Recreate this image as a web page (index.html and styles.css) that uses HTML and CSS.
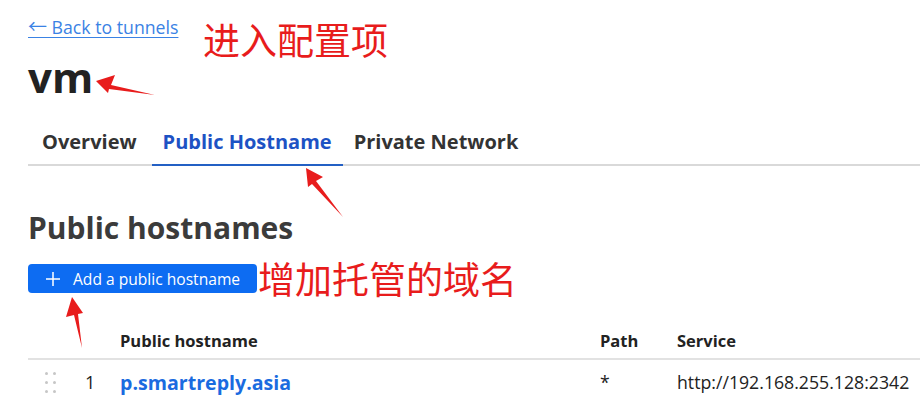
FILE: index.html
```html
<!DOCTYPE html>
<html lang="en">
<head>
<meta charset="utf-8">
<title>vm - Public Hostname</title>
<link rel="stylesheet" href="styles.css">
</head>
<body>
<div class="page">
  <a class="back" href="#"><span class="back-arrow">←</span> Back to tunnels</a>
  <h1 class="title">vm</h1>

  <nav class="tabs">
    <a class="tab" href="#">Overview</a>
    <a class="tab active" href="#">Public Hostname</a>
    <a class="tab" href="#">Private Network</a>
  </nav>

  <h2 class="section-title">Public hostnames</h2>

  <button class="btn-add" type="button">
    <svg class="plus" width="16" height="16" viewBox="0 0 16 16"><path d="M8 1v14M1 8h14" stroke="#fff" stroke-width="1.5" fill="none"/></svg>
    <span>Add a public hostname</span>
  </button>

  <div class="table">
    <div class="row head">
      <div class="cell"></div>
      <div class="cell"></div>
      <div class="cell">Public hostname</div>
      <div class="cell">Path</div>
      <div class="cell">Service</div>
    </div>
    <div class="row body">
      <div class="cell handle">
        <span class="dots"><i></i><i></i><i></i><i></i><i></i><i></i></span>
      </div>
      <div class="cell num">1</div>
      <div class="cell host"><a href="#">p.smartreply.asia</a></div>
      <div class="cell">*</div>
      <div class="cell">http://192.168.255.128:2342</div>
    </div>
  </div>
</div>

<div class="note note-1">进入配置项</div>
<div class="note note-2">增加托管的域名</div>

<svg class="arrows" width="920" height="402" viewBox="0 0 920 402">
  <polygon fill="#e81c1c" points="96,81 115,75 111,85 155,95 109,89 108,93"/>
  <polygon fill="#e81c1c" points="306,168 323,177 316,181 343,217 312,184 308,187"/>
  <polygon fill="#e81c1c" points="72,297 83,313 78,314 82,348 74,315 66,317"/>
</svg>
</body>
</html>
```

FILE: styles.css
```css
* { box-sizing: border-box; }

html, body {
  margin: 0;
  padding: 0;
  background: #fff;
}

body {
  font-family: "Open Sans", "Noto Sans", sans-serif;
  color: #222;
  width: 920px;
  height: 402px;
  overflow: hidden;
  position: relative;
}

.page {
  padding: 14px 0 0 28px;
}

.back {
  display: inline-block;
  height: 26px;
  font-size: 17.7px;
  line-height: 26px;
  color: #3a82e4;
  text-decoration: underline;
  text-underline-offset: 3px;
  text-decoration-thickness: 1px;
}

.back-arrow {
  font-family: "Noto Sans CJK SC", sans-serif;
  font-size: 19px;
  line-height: 1;
}

.title {
  margin: 12px 0 0;
  font-size: 42px;
  line-height: 50px;
  font-weight: 700;
  color: #222;
}

.tabs {
  display: flex;
  margin-top: 25px;
  border-bottom: 2px solid #d9d9d9;
  padding-left: 3px;
}

.tab {
  display: block;
  padding: 0 11px 7px;
  margin-bottom: -2px;
  font-size: 20px;
  line-height: 30px;
  font-weight: 700;
  color: #333;
  text-decoration: none;
  border-bottom: 2px solid transparent;
}

.tab.active {
  color: #1d52c4;
  border-bottom-color: #2360c4;
  margin-left: 4px;
}

.section-title {
  margin: 42px 0 0;
  font-size: 30px;
  line-height: 40px;
  font-weight: 700;
  color: #3b3b3b;
}

.btn-add {
  display: flex;
  align-items: center;
  gap: 12px;
  margin-top: 16px;
  height: 29px;
  width: 229px;
  padding: 0 0 0 17px;
  border: none;
  border-radius: 4px;
  background: #0d6cf2;
  color: #fff;
  font-family: inherit;
  font-size: 15.6px;
}

.plus { flex: none; }

.table {
  margin-top: 29px;
}

.row {
  display: grid;
  grid-template-columns: 42px 50px 480px 77px 1fr;
  align-items: center;
}

.row.head {
  height: 38px;
  border-bottom: 2px solid #e2e2e2;
  font-size: 16.5px;
  font-weight: 700;
  color: #222;
}

.row.body {
  height: 44px;
  font-size: 17.7px;
  color: #222;
}

.handle {
  display: flex;
  justify-content: center;
}

.dots {
  display: grid;
  grid-template-columns: 3px 3px;
  column-gap: 5px;
  row-gap: 6px;
  margin-left: 2px;
}

.dots i {
  display: block;
  width: 3px;
  height: 3px;
  border-radius: 50%;
  background: #c6c6c6;
}

.num {
  padding-left: 15px;
  font-size: 18px;
}

.host a {
  color: #1a6be0;
  font-weight: 700;
  font-size: 19.6px;
  text-decoration: none;
}

.note {
  position: absolute;
  font-family: "Noto Sans CJK SC", sans-serif;
  font-size: 37px;
  line-height: 40px;
  color: #e81c1c;
  white-space: nowrap;
}

.note-1 { left: 203px; top: 19px; }
.note-2 { left: 258px; top: 258px; }

.arrows {
  position: absolute;
  left: 0;
  top: 0;
  pointer-events: none;
}
```
